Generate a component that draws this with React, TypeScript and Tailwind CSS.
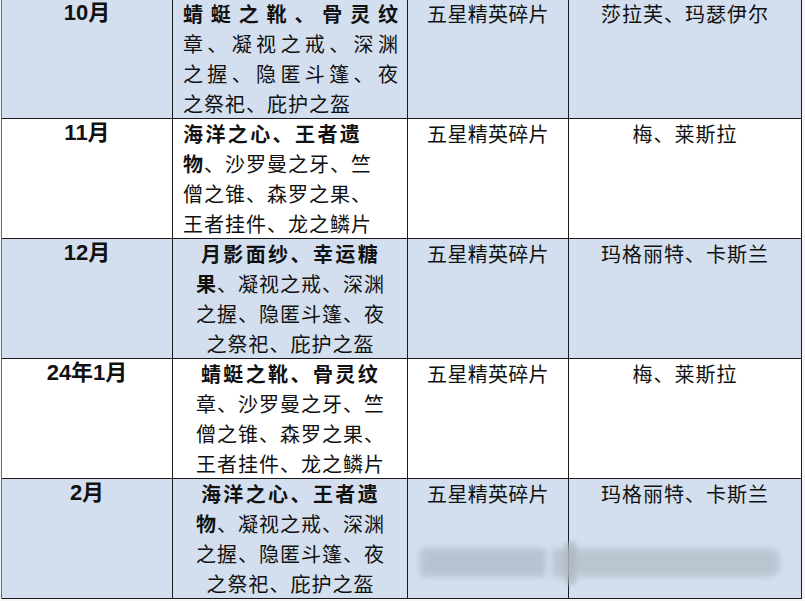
import React from "react";

type Seg = { t: string; b?: boolean };
type Line = { segs: Seg[]; j?: boolean; bold?: boolean };
type Row = {
  month: string;
  blue: boolean;
  center: boolean;
  lines: Line[];
  c3: string;
  c4: string;
};

const L = (t: string, opts: { b?: boolean; j?: boolean } = {}): Line => ({
  segs: [{ t, b: opts.b }],
  j: opts.j,
  bold: opts.b,
});
const LB = (b: string, rest: string): Line => ({
  segs: [{ t: b, b: true }, { t: rest }],
});

const rows: Row[] = [
  {
    month: "10月",
    blue: true,
    center: false,
    lines: [
      L("蜻蜓之靴、骨灵纹", { b: true, j: true }),
      L("章、凝视之戒、深渊", { j: true }),
      L("之握、隐匿斗篷、夜", { j: true }),
      L("之祭祀、庇护之盔"),
    ],
    c3: "五星精英碎片",
    c4: "莎拉芙、玛瑟伊尔",
  },
  {
    month: "11月",
    blue: false,
    center: false,
    lines: [
      L("海洋之心、王者遗", { b: true }),
      LB("物", "、沙罗曼之牙、竺"),
      L("僧之锥、森罗之果、"),
      L("王者挂件、龙之鳞片"),
    ],
    c3: "五星精英碎片",
    c4: "梅、莱斯拉",
  },
  {
    month: "12月",
    blue: true,
    center: true,
    lines: [
      L("月影面纱、幸运糖", { b: true }),
      LB("果", "、凝视之戒、深渊"),
      L("之握、隐匿斗篷、夜"),
      L("之祭祀、庇护之盔"),
    ],
    c3: "五星精英碎片",
    c4: "玛格丽特、卡斯兰",
  },
  {
    month: "24年1月",
    blue: false,
    center: true,
    lines: [
      L("蜻蜓之靴、骨灵纹", { b: true }),
      L("章、沙罗曼之牙、竺"),
      L("僧之锥、森罗之果、"),
      L("王者挂件、龙之鳞片"),
    ],
    c3: "五星精英碎片",
    c4: "梅、莱斯拉",
  },
  {
    month: "2月",
    blue: true,
    center: true,
    lines: [
      L("海洋之心、王者遗", { b: true }),
      LB("物", "、凝视之戒、深渊"),
      L("之握、隐匿斗篷、夜"),
      L("之祭祀、庇护之盔"),
    ],
    c3: "五星精英碎片",
    c4: "玛格丽特、卡斯兰",
  },
];

const cjk = "font-['Noto_Sans_CJK_SC','Noto_Sans_CJK_SC',sans-serif]";

export default function App() {
  return (
    <div className="relative w-[805px] h-[601px] overflow-hidden bg-[#f7f7f7] text-[#111]">
      <div className="ml-px -mt-[2px] w-[801px] border-l border-t border-l-[#6b6b6b] border-t-[#1a1a1a]">
        {rows.map((r, i) => (
          <div
            key={i}
            className={`grid grid-cols-[171px_235px_161px_233px] grid-rows-[120px] h-[120px] ${
              r.blue ? "bg-[#d3dfee]" : "bg-white"
            }`}
          >
            <div className="border-r border-b border-[#1a1a1a] text-center">
              <div className="font-['Liberation_Sans','Noto_Sans_CJK_SC',sans-serif] font-bold text-[22px] leading-[28px]">
                {r.month}
              </div>
            </div>
            <div
              className={`border-r border-b border-[#1a1a1a] pl-[10px] pr-[9px] ${cjk} text-[20px] leading-[30px] ${
                r.center ? "text-center" : "text-left"
              }`}
            >
              {r.lines.map((ln, k) => (
                <div
                  key={k}
                  className={`whitespace-nowrap ${
                    ln.j
                      ? "text-justify [text-align-last:justify] tracking-[0px]"
                      : ln.bold
                      ? "tracking-[2.4px]"
                      : "tracking-[1px]"
                  }`}
                >
                  {ln.segs.map((s, m) => (
                    <span key={m} className={s.b ? "font-bold" : "font-normal"}>
                      {s.t}
                    </span>
                  ))}
                </div>
              ))}
            </div>
            <div
              className={`border-r border-b border-[#1a1a1a] text-center ${cjk} text-[20px] leading-[30px] tracking-[0.3px]`}
            >
              {r.c3}
            </div>
            <div
              className={`border-r border-b border-[#1a1a1a] text-center ${cjk} text-[20px] leading-[30px] tracking-[1px]`}
            >
              {r.c4}
            </div>
          </div>
        ))}
      </div>

      {/* blurred watermark */}
      <div className="absolute left-[420px] top-[548px] w-[126px] h-[29px] bg-[#aeb7c4] opacity-70 blur-[3px] rounded-sm" />
      <div className="absolute left-[552px] top-[548px] w-[228px] h-[29px] bg-[#b2bac6] opacity-70 blur-[3px] rounded-r-xl" />
      <div className="absolute left-[565px] top-[542px] w-[11px] h-[43px] bg-[#aab3bf] opacity-60 blur-[2px]" />
    </div>
  );
}
